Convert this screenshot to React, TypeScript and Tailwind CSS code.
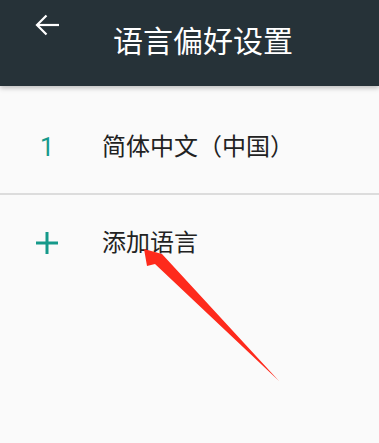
import React from "react";

const CJK = "font-['Roboto','Noto_Sans_CJK_SC',sans-serif]";

export default function App() {
  return (
    <div className={`relative h-[443px] w-[379px] overflow-hidden bg-[#fafafa] ${CJK}`}>
      <header className="relative z-10 flex h-[86px] items-start bg-[#263238] shadow-[0_2px_5px_rgba(0,0,0,0.25)]">
        <button type="button" className="ml-[34px] mt-[13px] flex h-[24px] w-[27px] items-center justify-center text-white">
          <svg width="27" height="24" viewBox="0 0 27 24" fill="none" stroke="currentColor" strokeWidth="2.2">
            <path d="M3 12h22" />
            <path d="M12.5 2.5 3 12l9.5 9.5" />
          </svg>
        </button>
        <h1 className="ml-[52px] mt-[22px] text-[30px] leading-[40px] font-normal text-white">语言偏好设置</h1>
      </header>

      <div className="flex h-[107px] items-center pt-[15px]">
        <span className="w-[102px] pl-[40px] text-[25px] leading-none text-[#15998a]">1</span>
        <span className="text-[24px] leading-none text-[#222]">简体中文（中国）</span>
      </div>
      <div className="h-[2px] bg-[#dcdcdc]" />
      <div className="flex h-[96px] items-center">
        <span className="flex w-[102px] justify-start pl-[36px]">
          <svg width="22" height="22" viewBox="0 0 22 22" fill="none" stroke="#15998a" strokeWidth="3">
            <path d="M11 0v22M0 11h22" />
          </svg>
        </span>
        <span className="text-[24px] leading-none text-[#222]">添加语言</span>
      </div>

      {/* red annotation arrow */}
      <svg className="absolute left-0 top-0" width="379" height="443" viewBox="0 0 379 443">
        <polygon points="144,249 162,254 279,381 155,264 147,266" fill="#fe2a1c" />
      </svg>
    </div>
  );
}
